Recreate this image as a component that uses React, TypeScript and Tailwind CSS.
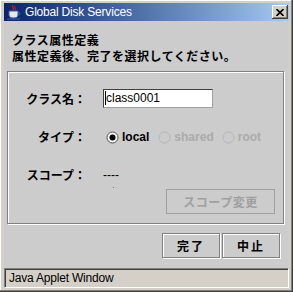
import React from "react";

const jp = "font-['Noto_Sans_CJK_JP','Noto_Sans',sans-serif]";
const sans = "font-['Liberation_Sans',Arial,sans-serif]";

function JavaCup() {
  return (
    <svg width="16" height="16" viewBox="0 0 16 16">
      <path d="M7 1 C5 3 9 4 7 6" stroke="#d02020" strokeWidth="1.2" fill="none" />
      <path d="M9 2 C8 3.5 10 4.5 9 6" stroke="#d02020" strokeWidth="1" fill="none" />
      <path d="M3 7 H12 V11 C12 13 10 14 7.5 14 C5 14 3 13 3 11 Z" fill="#e8e8f0" stroke="#4060a0" strokeWidth="1" />
      <path d="M12 8 C14.5 8 14.5 11 12 11" stroke="#4060a0" strokeWidth="1" fill="none" />
      <path d="M1 15 H14" stroke="#4060a0" strokeWidth="1" />
    </svg>
  );
}

function Radio({ checked, disabled }: { checked?: boolean; disabled?: boolean }) {
  return (
    <svg width="13" height="13" viewBox="0 0 13 13" className="shrink-0">
      <circle cx="6.5" cy="6.5" r="5.5" fill={disabled ? "none" : "#f4f4f4"} stroke={disabled ? "#b4b4b4" : "#505050"} strokeWidth="1" />
      {checked && <circle cx="6.5" cy="6.5" r="3" fill="#000" />}
    </svg>
  );
}

export default function App() {
  const etched = "border border-[#808080] shadow-[inset_1px_1px_0_#ffffff,1px_1px_0_#ffffff]";

  return (
    <div className="w-[293px] h-[292px] bg-[#d4d0c8] pt-[3px] pl-[4px] pr-[4px] pb-[4px] flex flex-col shadow-[inset_-1px_-1px_0_#404040,inset_-2px_-2px_0_#808080,inset_1px_1px_0_#ffffff]">
      {/* title bar */}
      <div className="h-[18px] flex items-center bg-gradient-to-r from-[#0a246a] to-[#a6caf0] pl-[2px] pr-[1px]">
        <JavaCup />
        <span className={`${sans} text-[12px] tracking-[-0.2px] text-white ml-[3px] leading-none`}>Global Disk Services</span>
        <div className="ml-auto w-[16px] h-[14px] bg-[#d4d0c8] flex items-center justify-center shadow-[inset_-1px_-1px_0_#404040,inset_1px_1px_0_#ffffff,inset_-2px_-2px_0_#808080]">
          <svg width="8" height="7" viewBox="0 0 8 7">
            <path d="M0.5 0 L7.5 7 M7.5 0 L0.5 7" stroke="#000" strokeWidth="1.6" />
          </svg>
        </div>
      </div>

      {/* body */}
      <div className="flex-1 bg-[#cccccc] flex flex-col pt-[11px]">
        <div className={`${jp} font-bold text-[12px] leading-[16px] tracking-[0.5px] text-black pl-[8px]`}>
          <div>クラス属性定義</div>
          <div>属性定義後、完了を選択してください。</div>
        </div>

        <div className={`${etched} ml-[3px] mt-[7px] w-[277px] h-[153px] flex flex-col pt-[17px]`}>
          <div className="flex items-center h-[19px]">
            <div className={`${jp} font-bold text-[12px] w-[78px] text-right text-black`}>クラス名：</div>
            <div className={`${sans} ml-[17px] w-[110px] h-[19px] bg-white border border-[#404040] border-r-[#a0a0a0] border-b-[#a0a0a0] text-[12px] leading-[17px] pl-[1px] text-black`}>
              <span className="border-l border-black">class0001</span>
            </div>
          </div>

          <div className="flex items-center h-[20px] mt-[19px]">
            <div className={`${jp} font-bold text-[12px] w-[78px] text-right text-black`}>タイプ：</div>
            <div className={`${sans} ml-[20px] flex items-center font-bold text-[12px]`}>
              <Radio checked />
              <span className="ml-[3px] text-black">local</span>
              <span className="ml-[9px]"><Radio disabled /></span>
              <span className="ml-[3px] text-[#ababab]">shared</span>
              <span className="ml-[8px]"><Radio disabled /></span>
              <span className="ml-[3px] text-[#ababab]">root</span>
            </div>
          </div>

          <div className="relative flex items-center h-[20px] mt-[18px]">
            <div className={`${jp} font-bold text-[12px] w-[78px] text-right text-black`}>スコープ：</div>
            <div className={`${sans} ml-[17px] text-[12px] text-black leading-none`}>----</div>
            <div className="absolute left-[105px] top-[22px] w-px h-px bg-[#7078a8]" />
          </div>

          <div className="flex justify-end mt-[4px] pr-[8px]">
            <div className={`${jp} w-[109px] h-[25px] border border-[#a0a0a0] flex items-center justify-center font-bold text-[12px] tracking-[0.5px] text-[#a0a0a0]`}>
              スコープ変更
            </div>
          </div>
        </div>

        <div className="flex justify-end gap-[2px] mt-[9px] pr-[9px]">
          <div className={`${etched} ${jp} w-[58px] h-[25px] flex items-center justify-center font-bold text-[12px] tracking-[2px] text-black`}>完了</div>
          <div className={`${etched} ${jp} w-[58px] h-[25px] flex items-center justify-center font-bold text-[12px] tracking-[2px] text-black`}>中止</div>
        </div>
      </div>

      {/* status bar */}
      <div className={`${sans} h-[20px] bg-[#d4d0c8] border-t border-l border-[#808080] border-b border-r border-b-white border-r-white shadow-[inset_1px_1px_0_#404040] flex items-center pl-[4px] text-[12px] text-black tracking-[-0.2px]`}>
        Java Applet Window
      </div>
    </div>
  );
}
